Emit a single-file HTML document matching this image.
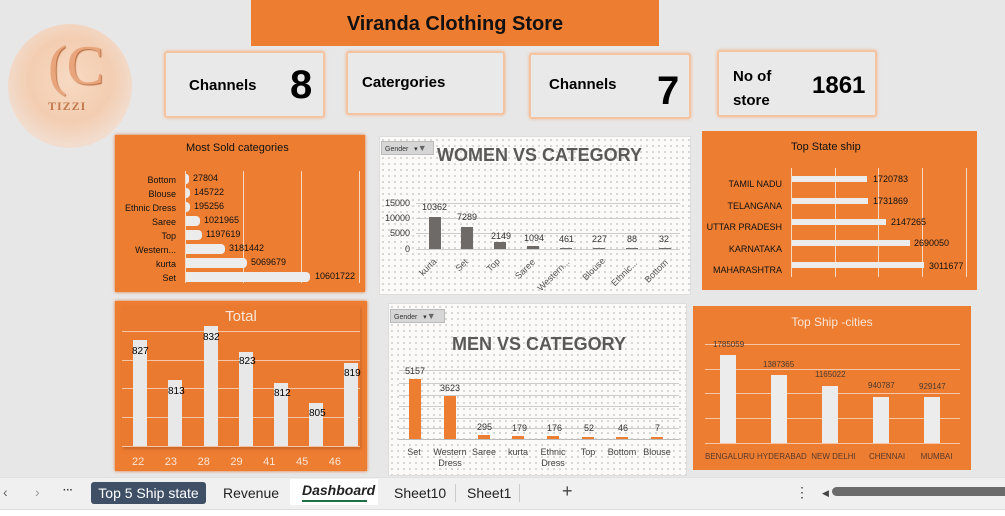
<!DOCTYPE html>
<html><head><meta charset="utf-8"><style>
*{margin:0;padding:0;box-sizing:border-box}
body{width:1005px;height:516px;overflow:hidden;background:#e7e7e7;font-family:"Liberation Sans",sans-serif;position:relative}
.a{position:absolute}
.or{background:#ed7d31}
.card{position:absolute;background:#e9e9e9;border:2px solid #f4c4a0;box-shadow:0 0 3px #f0b890;border-radius:3px}
.dot{background-color:#fbfaf8;background-image:radial-gradient(circle,#a8a8a8 0.6px,transparent 0.9px);background-size:6px 6px}
.t9{font-size:9px;color:#111;white-space:nowrap}
.btn{position:absolute;background:#d6d6d6;border:1px solid #bbb;font-size:7px;line-height:12px;color:#333;padding:0 3px;white-space:nowrap;overflow:hidden}
</style></head><body>

<!-- logo -->
<div class="a" style="left:8px;top:24px;width:124px;height:124px;border-radius:50%;background:radial-gradient(circle at 50% 45%,#f7d9c2 0%,#f3cdb1 45%,#f2dccd 70%,#e8e4e1 100%)"></div>
<div class="a" style="left:48px;top:34px;font-family:'Liberation Serif',serif;font-size:56px;color:#e8a57c;text-shadow:1px 1px 1px #b86c3f">(C</div>
<div class="a" style="left:48px;top:99px;font-family:'Liberation Serif',serif;font-size:12px;font-weight:bold;color:#c27a4e;letter-spacing:1px">TIZZI</div>

<!-- title -->
<div class="a or" style="left:251px;top:0;width:408px;height:46px;text-align:center;font-size:20px;font-weight:bold;line-height:48px;color:#111">Viranda Clothing Store</div>

<!-- cards -->
<div class="card" style="left:164px;top:51px;width:161px;height:67px"><span class="a" style="left:23px;top:24px;font-size:15px;font-weight:bold">Channels</span><span class="a" style="left:124px;top:10px;font-size:40px;font-weight:bold">8</span></div>
<div class="card" style="left:346px;top:51px;width:159px;height:64px"><span class="a" style="left:14px;top:21px;font-size:15px;font-weight:bold">Catergories</span></div>
<div class="card" style="left:529px;top:53px;width:162px;height:66px"><span class="a" style="left:18px;top:21px;font-size:15px;font-weight:bold">Channels</span><span class="a" style="left:126px;top:14px;font-size:40px;font-weight:bold">7</span></div>
<div class="card" style="left:717px;top:50px;width:160px;height:67px"><span class="a" style="left:14px;top:13px;font-size:15px;font-weight:bold;line-height:24px">No of<br>store</span><span class="a" style="left:93px;top:20px;font-size:24px;font-weight:bold">1861</span></div>

<!-- Most sold -->
<div class="a or" style="left:115px;top:135px;width:250px;height:157px;box-shadow:0 0 3px #d97030"></div>
<div class="a t9" style="left:186px;top:142px;font-size:11px">Most Sold categories</div>
<div class="a" style="left:185px;top:171px;width:1px;height:112px;background:#f7d8c2"></div>
<div class="a" style="left:243px;top:171px;width:1px;height:112px;background:#f7d8c2"></div>
<div class="a" style="left:301px;top:171px;width:1px;height:112px;background:#f7d8c2"></div>
<div class="a" style="left:359px;top:171px;width:1px;height:112px;background:#f7d8c2"></div>
<div class="a t9" style="left:118px;top:173px;width:58px;text-align:right;line-height:14px">Bottom<br>Blouse<br>Ethnic Dress<br>Saree<br>Top<br>Western...<br>kurta<br>Set</div>
<div class="a" style="left:186px;top:174px;width:3px;height:10px;background:#ececec;border-radius:0 4px 4px 0"></div>
<div class="a" style="left:186px;top:188px;width:4px;height:10px;background:#ececec;border-radius:0 4px 4px 0"></div>
<div class="a" style="left:186px;top:202px;width:4px;height:10px;background:#ececec;border-radius:0 4px 4px 0"></div>
<div class="a" style="left:186px;top:216px;width:14px;height:10px;background:#ececec;border-radius:0 4px 4px 0"></div>
<div class="a" style="left:186px;top:230px;width:16px;height:10px;background:#ececec;border-radius:0 4px 4px 0"></div>
<div class="a" style="left:186px;top:244px;width:39px;height:10px;background:#ececec;border-radius:0 4px 4px 0"></div>
<div class="a" style="left:186px;top:258px;width:61px;height:10px;background:#ececec;border-radius:0 4px 4px 0"></div>
<div class="a" style="left:186px;top:272px;width:124px;height:10px;background:#ececec;border-radius:0 4px 4px 0"></div>
<div class="a t9" style="left:193px;top:173px">27804</div>
<div class="a t9" style="left:194px;top:187px">145722</div>
<div class="a t9" style="left:194px;top:201px">195256</div>
<div class="a t9" style="left:204px;top:215px">1021965</div>
<div class="a t9" style="left:206px;top:229px">1197619</div>
<div class="a t9" style="left:229px;top:243px">3181442</div>
<div class="a t9" style="left:251px;top:257px">5069679</div>
<div class="a t9" style="left:315px;top:271px">10601722</div>

<!-- Women -->
<div class="a dot" style="left:379px;top:136px;width:312px;height:159px;border:1px solid #ddd"></div>
<div class="btn" style="left:381px;top:141px;width:53px;height:14px">Gender &nbsp; ▾<b style="color:#666;font-size:9px">▼</b></div>
<div class="a" style="left:437px;top:145px;font-size:18px;font-weight:bold;color:#595959">WOMEN VS CATEGORY</div>
<div class="a t9" style="left:380px;top:198px;width:30px;text-align:right;color:#333">15000</div>
<div class="a t9" style="left:380px;top:213px;width:30px;text-align:right;color:#333">10000</div>
<div class="a t9" style="left:380px;top:228px;width:30px;text-align:right;color:#333">5000</div>
<div class="a t9" style="left:380px;top:244px;width:30px;text-align:right;color:#333">0</div>
<div class="a" style="left:416px;top:203px;width:264px;height:1px;background:#ccc"></div>
<div class="a" style="left:416px;top:218px;width:264px;height:1px;background:#ccc"></div>
<div class="a" style="left:416px;top:233px;width:264px;height:1px;background:#ccc"></div>
<div class="a" style="left:416px;top:249px;width:264px;height:1px;background:#ccc"></div>
<div class="a" style="left:429px;top:217px;width:12px;height:32px;background:#6e6a67"></div>
<div class="a" style="left:461px;top:227px;width:12px;height:22px;background:#6e6a67"></div>
<div class="a" style="left:494px;top:242px;width:12px;height:7px;background:#6e6a67"></div>
<div class="a" style="left:527px;top:246px;width:12px;height:3px;background:#6e6a67"></div>
<div class="a" style="left:560px;top:248px;width:12px;height:1px;background:#6e6a67"></div>
<div class="a" style="left:593px;top:248px;width:12px;height:1px;background:#6e6a67"></div>
<div class="a" style="left:626px;top:248px;width:12px;height:1px;background:#6e6a67"></div>
<div class="a" style="left:659px;top:248px;width:12px;height:1px;background:#6e6a67"></div>
<div class="a t9" style="left:422px;top:202px;color:#333">10362</div>
<div class="a t9" style="left:457px;top:212px;color:#333">7289</div>
<div class="a t9" style="left:491px;top:231px;color:#333">2149</div>
<div class="a t9" style="left:524px;top:233px;color:#333">1094</div>
<div class="a t9" style="left:559px;top:234px;color:#333">461</div>
<div class="a t9" style="left:592px;top:234px;color:#333">227</div>
<div class="a t9" style="left:627px;top:234px;color:#333">88</div>
<div class="a t9" style="left:659px;top:234px;color:#333">32</div>
<div class="a t9" style="left:418px;top:262px;transform:rotate(-45deg);color:#555">kurta</div>
<div class="a t9" style="left:455px;top:260px;transform:rotate(-45deg);color:#555">Set</div>
<div class="a t9" style="left:486px;top:260px;transform:rotate(-45deg);color:#555">Top</div>
<div class="a t9" style="left:513px;top:264px;transform:rotate(-45deg);color:#555">Saree</div>
<div class="a t9" style="left:533px;top:270px;transform:rotate(-45deg);color:#555">Western...</div>
<div class="a t9" style="left:580px;top:264px;transform:rotate(-45deg);color:#555">Blouse</div>
<div class="a t9" style="left:608px;top:268px;transform:rotate(-45deg);color:#555">Ethnic...</div>
<div class="a t9" style="left:642px;top:266px;transform:rotate(-45deg);color:#555">Bottom</div>

<!-- Top State -->
<div class="a or" style="left:702px;top:131px;width:275px;height:159px"></div>
<div class="a t9" style="left:791px;top:141px;font-size:11px">Top State ship</div>
<div class="a" style="left:791px;top:168px;width:1px;height:109px;background:#f7d8c2"></div>
<div class="a" style="left:835px;top:168px;width:1px;height:109px;background:#f7d8c2"></div>
<div class="a" style="left:878px;top:168px;width:1px;height:109px;background:#f7d8c2"></div>
<div class="a" style="left:922px;top:168px;width:1px;height:109px;background:#f7d8c2"></div>
<div class="a" style="left:966px;top:168px;width:1px;height:109px;background:#f7d8c2"></div>
<div class="a t9" style="left:705px;top:174px;width:77px;text-align:right;line-height:21.5px">TAMIL NADU<br>TELANGANA<br>UTTAR PRADESH<br>KARNATAKA<br>MAHARASHTRA</div>
<div class="a" style="left:792px;top:176px;width:75px;height:6px;background:#ececec"></div>
<div class="a" style="left:792px;top:198px;width:76px;height:6px;background:#ececec"></div>
<div class="a" style="left:792px;top:219px;width:94px;height:6px;background:#ececec"></div>
<div class="a" style="left:792px;top:240px;width:118px;height:6px;background:#ececec"></div>
<div class="a" style="left:792px;top:262px;width:132px;height:6px;background:#ececec"></div>
<div class="a t9" style="left:873px;top:174px">1720783</div>
<div class="a t9" style="left:873px;top:196px">1731869</div>
<div class="a t9" style="left:891px;top:217px">2147265</div>
<div class="a t9" style="left:914px;top:238px">2690050</div>
<div class="a t9" style="left:929px;top:261px">3011677</div>

<!-- Total -->
<div class="a or" style="left:115px;top:301px;width:252px;height:170px;box-shadow:0 0 3px #d97030"></div>
<div class="a" style="left:122px;top:306px;width:238px;height:141px;background:#ea7a2f;box-shadow:1px 2px 3px #c8642a"></div>
<div class="a" style="left:122px;top:308px;width:238px;text-align:center;font-size:15px;color:#fbe5d6">Total</div>
<div class="a" style="left:122px;top:331px;width:238px;height:1px;background:#f6c7a6"></div>
<div class="a" style="left:122px;top:360px;width:238px;height:1px;background:#f6c7a6"></div>
<div class="a" style="left:122px;top:388px;width:238px;height:1px;background:#f6c7a6"></div>
<div class="a" style="left:122px;top:417px;width:238px;height:1px;background:#f6c7a6"></div>
<div class="a" style="left:122px;top:446px;width:238px;height:1px;background:#f6c7a6"></div>
<div class="a" style="left:133px;top:340px;width:14px;height:106px;background:#e8e8e8"></div>
<div class="a" style="left:168px;top:380px;width:14px;height:66px;background:#e8e8e8"></div>
<div class="a" style="left:204px;top:326px;width:14px;height:120px;background:#e8e8e8"></div>
<div class="a" style="left:239px;top:352px;width:14px;height:94px;background:#e8e8e8"></div>
<div class="a" style="left:274px;top:383px;width:14px;height:63px;background:#e8e8e8"></div>
<div class="a" style="left:309px;top:403px;width:14px;height:43px;background:#e8e8e8"></div>
<div class="a" style="left:344px;top:363px;width:14px;height:83px;background:#e8e8e8"></div>
<div class="a" style="left:132px;top:346px;font-size:10px">827</div>
<div class="a" style="left:168px;top:386px;font-size:10px">813</div>
<div class="a" style="left:203px;top:332px;font-size:10px">832</div>
<div class="a" style="left:239px;top:356px;font-size:10px">823</div>
<div class="a" style="left:274px;top:388px;font-size:10px">812</div>
<div class="a" style="left:309px;top:408px;font-size:10px">805</div>
<div class="a" style="left:344px;top:368px;font-size:10px">819</div>
<div class="a" style="left:132px;top:456px;font-size:11px;color:#fbe5d6;word-spacing:17.5px;white-space:nowrap">22 23 28 29 41 45 46</div>

<!-- Men -->
<div class="a dot" style="left:388px;top:303px;width:299px;height:173px;border:1px solid #ddd"></div>
<div class="btn" style="left:390px;top:309px;width:55px;height:14px">Gender &nbsp; ▾<b style="color:#666;font-size:9px">▼</b></div>
<div class="a" style="left:452px;top:334px;font-size:18px;font-weight:bold;color:#595959">MEN VS CATEGORY</div>
<div class="a" style="left:399px;top:370px;width:280px;height:1px;background:#ccc"></div>
<div class="a" style="left:399px;top:383px;width:280px;height:1px;background:#ccc"></div>
<div class="a" style="left:399px;top:395px;width:280px;height:1px;background:#ccc"></div>
<div class="a" style="left:399px;top:406px;width:280px;height:1px;background:#ccc"></div>
<div class="a" style="left:399px;top:418px;width:280px;height:1px;background:#ccc"></div>
<div class="a" style="left:399px;top:428px;width:280px;height:1px;background:#ccc"></div>
<div class="a" style="left:399px;top:439px;width:280px;height:1px;background:#bbb"></div>
<div class="a" style="left:409px;top:379px;width:12px;height:60px;background:#ed7d31"></div>
<div class="a" style="left:444px;top:396px;width:12px;height:43px;background:#ed7d31"></div>
<div class="a" style="left:478px;top:435px;width:12px;height:4px;background:#ed7d31"></div>
<div class="a" style="left:512px;top:436px;width:12px;height:3px;background:#ed7d31"></div>
<div class="a" style="left:547px;top:436px;width:12px;height:3px;background:#ed7d31"></div>
<div class="a" style="left:582px;top:437px;width:12px;height:2px;background:#ed7d31"></div>
<div class="a" style="left:616px;top:437px;width:12px;height:2px;background:#ed7d31"></div>
<div class="a" style="left:651px;top:437px;width:12px;height:2px;background:#ed7d31"></div>
<div class="a t9" style="left:405px;top:366px;color:#333">5157</div>
<div class="a t9" style="left:440px;top:383px;color:#333">3623</div>
<div class="a t9" style="left:477px;top:422px;color:#333">295</div>
<div class="a t9" style="left:512px;top:423px;color:#333">179</div>
<div class="a t9" style="left:547px;top:423px;color:#333">176</div>
<div class="a t9" style="left:584px;top:423px;color:#333">52</div>
<div class="a t9" style="left:618px;top:423px;color:#333">46</div>
<div class="a t9" style="left:655px;top:423px;color:#333">7</div>
<div class="a t9" style="left:398px;top:447px;width:32px;text-align:center;color:#444;line-height:11px">Set</div>
<div class="a t9" style="left:430px;top:447px;width:40px;text-align:center;color:#444;line-height:11px">Western<br>Dress</div>
<div class="a t9" style="left:469px;top:447px;width:30px;text-align:center;color:#444">Saree</div>
<div class="a t9" style="left:503px;top:447px;width:30px;text-align:center;color:#444">kurta</div>
<div class="a t9" style="left:536px;top:447px;width:34px;text-align:center;color:#444;line-height:11px">Ethnic<br>Dress</div>
<div class="a t9" style="left:573px;top:447px;width:30px;text-align:center;color:#444">Top</div>
<div class="a t9" style="left:603px;top:447px;width:38px;text-align:center;color:#444">Bottom</div>
<div class="a t9" style="left:638px;top:447px;width:38px;text-align:center;color:#444">Blouse</div>

<!-- Cities -->
<div class="a or" style="left:693px;top:306px;width:278px;height:164px"></div>
<div class="a" style="left:693px;top:315px;width:278px;text-align:center;font-size:12px;color:#fbe5d6">Top Ship -cities</div>
<div class="a" style="left:705px;top:344px;width:255px;height:1px;background:#f6c7a6"></div>
<div class="a" style="left:705px;top:369px;width:255px;height:1px;background:#f6c7a6"></div>
<div class="a" style="left:705px;top:393px;width:255px;height:1px;background:#f6c7a6"></div>
<div class="a" style="left:705px;top:418px;width:255px;height:1px;background:#f6c7a6"></div>
<div class="a" style="left:705px;top:443px;width:255px;height:1px;background:#f6c7a6"></div>
<div class="a" style="left:720px;top:355px;width:16px;height:88px;background:#ececec"></div>
<div class="a" style="left:771px;top:375px;width:16px;height:68px;background:#ececec"></div>
<div class="a" style="left:822px;top:386px;width:16px;height:57px;background:#ececec"></div>
<div class="a" style="left:873px;top:397px;width:16px;height:46px;background:#ececec"></div>
<div class="a" style="left:924px;top:397px;width:16px;height:46px;background:#ececec"></div>
<div class="a" style="left:713px;top:340px;font-size:8px;color:#4a3a30">1785059</div>
<div class="a" style="left:763px;top:360px;font-size:8px;color:#4a3a30">1387365</div>
<div class="a" style="left:815px;top:370px;font-size:8px;color:#4a3a30">1165022</div>
<div class="a" style="left:868px;top:381px;font-size:8px;color:#4a3a30">940787</div>
<div class="a" style="left:919px;top:382px;font-size:8px;color:#4a3a30">929147</div>
<div class="a" style="left:705px;top:452px;font-size:8px;color:#5a3a2a;white-space:nowrap">BENGALURU HYDERABAD&nbsp; NEW DELHI&nbsp;&nbsp;&nbsp;&nbsp;&nbsp; CHENNAI&nbsp;&nbsp;&nbsp;&nbsp;&nbsp;&nbsp; MUMBAI</div>

<!-- tab bar -->
<div class="a" style="left:0;top:477px;width:1005px;height:32px;background:#f0f0f0;border-top:1px solid #e0e0e0"></div>
<div class="a" style="left:0;top:509px;width:1005px;height:7px;background:#fff;border-top:1px solid #ddd"></div>
<div class="a" style="left:3px;top:484px;font-size:14px;color:#666">‹</div>
<div class="a" style="left:35px;top:484px;font-size:14px;color:#999">›</div>
<div class="a" style="left:63px;top:485px;font-size:10px;font-weight:bold;color:#333">···</div>
<div class="a" style="left:91px;top:482px;width:115px;height:22px;background:#3e4f66;border-radius:3px;color:#fff;font-size:14px;text-align:center;line-height:22px">Top 5 Ship state</div>
<div class="a" style="left:223px;top:485px;font-size:14px;color:#222">Revenue</div>
<div class="a" style="left:290px;top:479px;width:88px;height:26px;background:#fff"></div>
<div class="a" style="left:302px;top:482px;font-size:14px;font-style:italic;font-weight:bold;color:#222">Dashboard</div>
<div class="a" style="left:302px;top:500px;width:65px;height:2px;background:#1e7145"></div>
<div class="a" style="left:394px;top:485px;font-size:14px;color:#222">Sheet10</div>
<div class="a" style="left:467px;top:485px;font-size:14px;color:#222">Sheet1</div>
<div class="a" style="left:455px;top:484px;width:1px;height:18px;background:#ccc"></div>
<div class="a" style="left:519px;top:484px;width:1px;height:18px;background:#ccc"></div>
<div class="a" style="left:562px;top:481px;font-size:18px;color:#444">+</div>
<div class="a" style="left:795px;top:484px;font-size:14px;color:#444">⋮</div>
<div class="a" style="left:822px;top:488px;font-size:9px;color:#444">◀</div>
<div class="a" style="left:832px;top:487px;width:173px;height:9px;background:#6b6b6b;border-radius:5px 0 0 5px"></div>
</body></html>
